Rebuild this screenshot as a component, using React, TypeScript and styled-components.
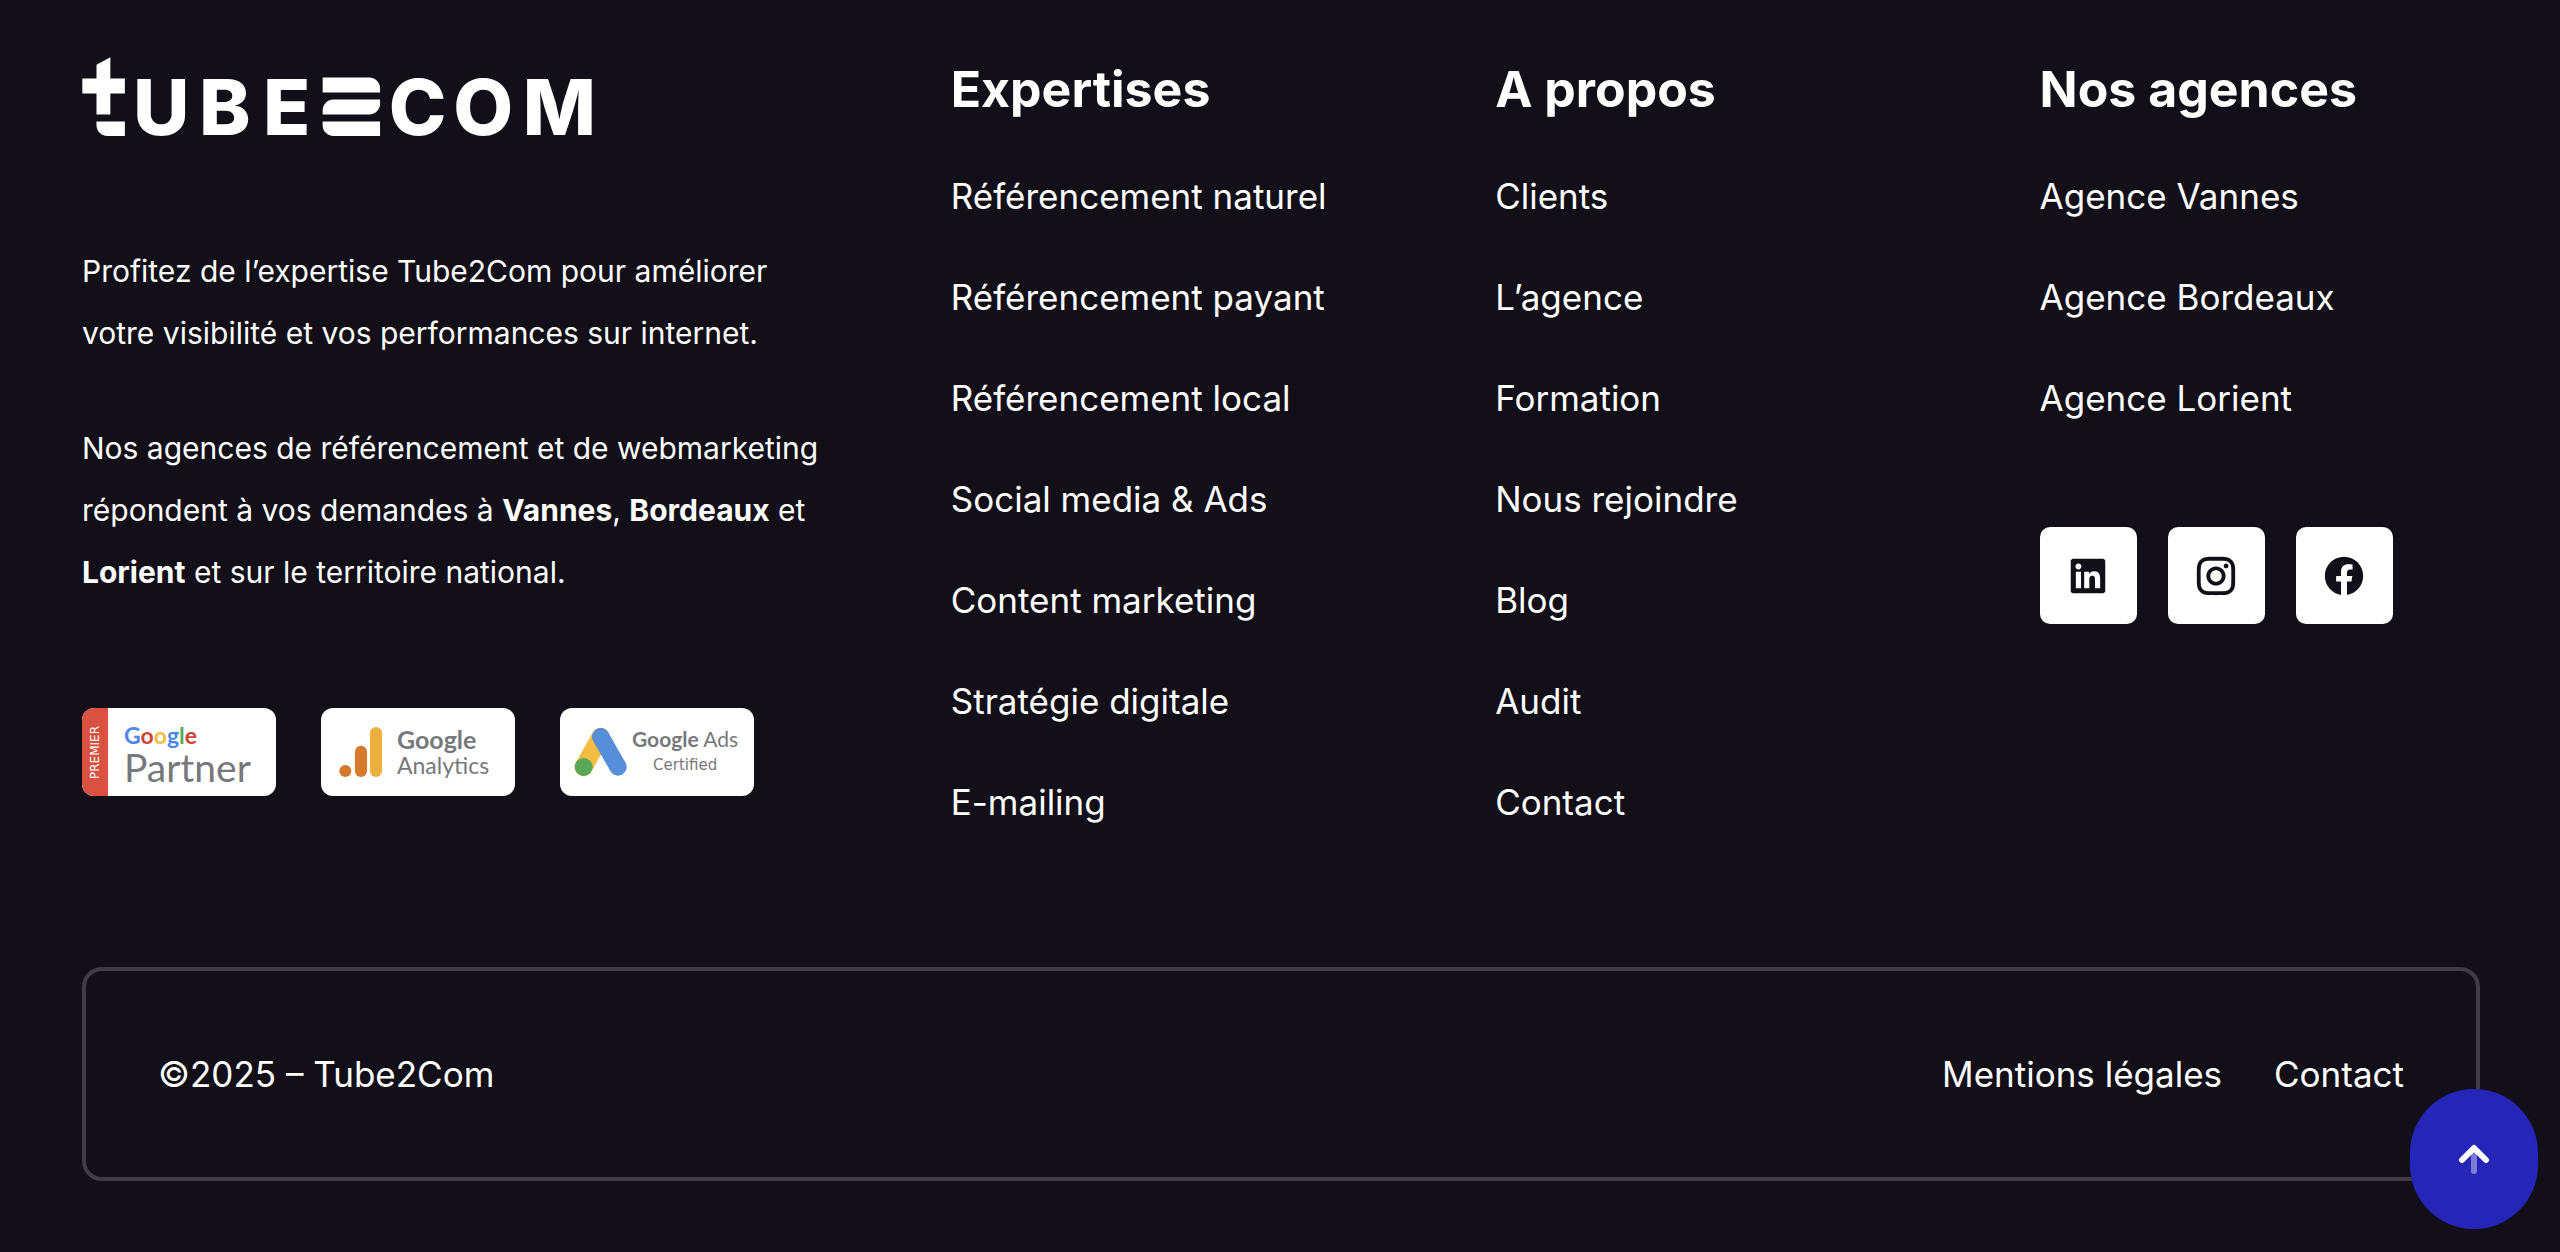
import React from "react";
import styled, { createGlobalStyle } from "styled-components";
import { RiFacebookCircleFill, RiInstagramLine, RiLinkedinBoxFill } from "react-icons/ri";

const GlobalStyle = createGlobalStyle`
  *, *::before, *::after { box-sizing: border-box; }
  body {
    margin: 0;
    background: #120f18;
    color: #fff;
    font-family: Inter, "Liberation Sans", sans-serif;
  }
  h2, p, ul { margin: 0; padding: 0; font-size: inherit; }
  ul { list-style: none; }
  a { color: inherit; text-decoration: none; }
`;

const Footer = styled.footer`
  padding: 55px 80px 71px 82px;
`;

const Columns = styled.div`
  display: grid;
  grid-template-columns: 764fr 440fr 440fr 440fr;
  column-gap: 104px;
`;

const Brand = styled.div`
  display: flex;
  flex-direction: column;
  align-items: flex-start;
  padding-top: 2px;
`;

const LogoLink = styled.a`
  display: block;
  margin-bottom: 103px;
`;

const LogoDrawing = styled.svg`
  display: block;
  overflow: visible;
`;

const Wordmark = styled.text`
  font-family: Inter, sans-serif;
  font-weight: 800;
  font-size: 230px;
`;

const About = styled.div`
  display: flex;
  flex-direction: column;
  gap: 53px;
  max-width: 758px;
  margin-bottom: 105px;
  font-size: 30px;
  line-height: 62px;
`;

const Badges = styled.div`
  display: flex;
  gap: 45px;
`;

const Badge = styled.div`
  display: flex;
  align-items: center;
  width: 194px;
  height: 88px;
  border-radius: 12px;
  overflow: hidden;
  background: #fff;
  color: #77787c;
  font-family: Lato, sans-serif;
`;

const Ribbon = styled.div`
  display: flex;
  align-items: center;
  justify-content: center;
  width: 26px;
  height: 100%;
  background: #d95140;
  color: #fff;
  font-family: "DejaVu Sans", sans-serif;
  font-size: 12px;
`;

const RibbonText = styled.span`
  writing-mode: vertical-rl;
  transform: rotate(180deg);
`;

const BadgeText = styled.div<{ $indent: number; $centered?: boolean }>`
  display: flex;
  flex-direction: column;
  align-items: ${(p) => (p.$centered ? "center" : "flex-start")};
  padding-left: ${(p) => p.$indent}px;
`;

const BadgeLine = styled.span<{ $size: number; $line: number; $bold?: boolean }>`
  font-size: ${(p) => p.$size}px;
  line-height: ${(p) => p.$line}px;
  font-weight: ${(p) => (p.$bold ? 700 : 400)};
  white-space: nowrap;
`;

const CertifiedLine = styled(BadgeLine)`
  font-family: "DejaVu Sans", sans-serif;
`;

const BadgeIcon = styled.svg`
  display: block;
  flex: none;
`;

const AnalyticsBadge = styled(Badge)`
  padding-left: 18px;
`;

const AdsBadge = styled(Badge)`
  padding-left: 14px;
`;

const Tint = styled.span<{ $color: string }>`
  color: ${(p) => p.$color};
`;

const ColumnTitle = styled.h2`
  margin-bottom: 46px;
  font-size: 50px;
  line-height: 68px;
  font-weight: 700;
  white-space: nowrap;
`;

const LinkList = styled.ul`
  display: flex;
  flex-direction: column;
  gap: 47px;
  font-size: 35px;
  line-height: 54px;
  white-space: nowrap;
`;

const Socials = styled.div`
  display: flex;
  gap: 31px;
  margin-top: 102px;
`;

const SocialLink = styled.a`
  display: flex;
  align-items: center;
  justify-content: center;
  width: 97px;
  height: 97px;
  border-radius: 10px;
  background: #fff;
  && { color: #120f18; }
`;

const LegalBar = styled.div`
  display: flex;
  align-items: center;
  justify-content: space-between;
  margin-top: 138px;
  padding: 76px 72px;
  border: 4px solid #3f3c43;
  border-radius: 20px;
  font-size: 35px;
  line-height: 54px;
`;

const LegalLinks = styled.nav`
  display: flex;
  gap: 52px;
`;

const TopButton = styled.button`
  position: fixed;
  right: 22px;
  bottom: 23px;
  display: flex;
  align-items: center;
  justify-content: center;
  width: 128px;
  height: 140px;
  padding: 0;
  border: 0;
  border-radius: 64px;
  background: #2525b8;
  cursor: pointer;
`;

const Logo = () => (
  <LogoDrawing width="509" height="80" viewBox="35 36 1506 237" fill="#fff" role="img" aria-label="Tube2Com">
    <path d="M77 59L118 37V100H161V144H118V206H77V144H35V100H77Z" />
    <path d="M77 227H161V270H109A32 32 0 0 1 77 238Z" />
    <Wordmark x="185 381 570" y="267">UBE</Wordmark>
    <path d="M747 97H885A32 32 0 0 1 917 129V141H747Z" />
    <path d="M779 162H917V174A32 32 0 0 1 885 206H747V194A32 32 0 0 1 779 162Z" />
    <path d="M747 227H917V270H779A32 32 0 0 1 747 238Z" />
    <Wordmark x="943 1134 1340" y="267">COM</Wordmark>
  </LogoDrawing>
);

const AnalyticsIcon = () => (
  <BadgeIcon width="44" height="52" viewBox="84 93 132 156" aria-hidden="true">
    <circle cx="103" cy="228" r="18" fill="#d7792b" />
    <rect x="132" y="152" width="36" height="94" rx="18" fill="#d7792b" />
    <rect x="177" y="96" width="36" height="150" rx="18" fill="#edaf3f" />
  </BadgeIcon>
);

const AdsIcon = () => (
  <BadgeIcon width="54" height="50" viewBox="74 96 162 150" strokeLinecap="round" aria-hidden="true">
    <path d="M103 216L154 125" stroke="#f2bd42" strokeWidth="54" />
    <path d="M154 125L206 216" stroke="#568ed9" strokeWidth="52" />
    <circle cx="103" cy="216" r="27" fill="#5aa755" />
  </BadgeIcon>
);

const ArrowUp = () => (
  <svg width="32" height="32" viewBox="0 0 32 32" fill="none" strokeWidth="6" strokeLinecap="round" strokeLinejoin="round" aria-hidden="true">
    <path d="M16 9V28" stroke="#7c7cd6" />
    <path d="M4 17L16 5L28 17" stroke="#fff" />
  </svg>
);

const googleLetters: [string, string][] = [
  ["G", "#4f86ec"],
  ["o", "#cf4436"],
  ["o", "#f2bf43"],
  ["g", "#4f86ec"],
  ["l", "#58ab5a"],
  ["e", "#cf4436"],
];

const expertises = [
  "Référencement naturel",
  "Référencement payant",
  "Référencement local",
  "Social media & Ads",
  "Content marketing",
  "Stratégie digitale",
  "E-mailing",
];
const about = ["Clients", "L’agence", "Formation", "Nous rejoindre", "Blog", "Audit", "Contact"];
const agencies = ["Agence Vannes", "Agence Bordeaux", "Agence Lorient"];

const socials = [
  { name: "LinkedIn", Icon: RiLinkedinBoxFill },
  { name: "Instagram", Icon: RiInstagramLine },
  { name: "Facebook", Icon: RiFacebookCircleFill },
];

const LinkColumn = ({ title, links, children }: { title: string; links: string[]; children?: React.ReactNode }) => (
  <div>
    <ColumnTitle>{title}</ColumnTitle>
    <LinkList>
      {links.map((label) => (
        <li key={label}>
          <a href="#">{label}</a>
        </li>
      ))}
    </LinkList>
    {children}
  </div>
);

export default function App() {
  return (
    <>
      <GlobalStyle />
      <Footer>
        <Columns>
          <Brand>
            <LogoLink href="#">
              <Logo />
            </LogoLink>
            <About>
              <p>
                Profitez de l’expertise Tube2Com pour améliorer
                <br />
                votre visibilité et vos performances sur internet.
              </p>
              <p>
                Nos agences de référencement et de webmarketing répondent à vos demandes à <b>Vannes</b>,{" "}
                <b>Bordeaux</b> et <b>Lorient</b> et sur le territoire national.
              </p>
            </About>
            <Badges>
              <Badge>
                <Ribbon>
                  <RibbonText>PREMIER</RibbonText>
                </Ribbon>
                <BadgeText $indent={16}>
                  <BadgeLine $size={23} $line={30} $bold>
                    {googleLetters.map(([letter, color], i) => (
                      <Tint key={i} $color={color}>
                        {letter}
                      </Tint>
                    ))}
                  </BadgeLine>
                  <BadgeLine $size={39} $line={34}>
                    Partner
                  </BadgeLine>
                </BadgeText>
              </Badge>
              <AnalyticsBadge>
                <AnalyticsIcon />
                <BadgeText $indent={14}>
                  <BadgeLine $size={25} $line={26} $bold>
                    Google
                  </BadgeLine>
                  <BadgeLine $size={23} $line={26}>
                    Analytics
                  </BadgeLine>
                </BadgeText>
              </AnalyticsBadge>
              <AdsBadge>
                <AdsIcon />
                <BadgeText $indent={4} $centered>
                  <BadgeLine $size={21} $line={26}>
                    <b>Google</b> Ads
                  </BadgeLine>
                  <CertifiedLine $size={15} $line={26}>
                    Certified
                  </CertifiedLine>
                </BadgeText>
              </AdsBadge>
            </Badges>
          </Brand>
          <LinkColumn title="Expertises" links={expertises} />
          <LinkColumn title="A propos" links={about} />
          <LinkColumn title="Nos agences" links={agencies}>
            <Socials>
              {socials.map(({ name, Icon }) => (
                <SocialLink key={name} href="#" aria-label={name}>
                  <Icon size={46} />
                </SocialLink>
              ))}
            </Socials>
          </LinkColumn>
        </Columns>
        <LegalBar>
          <span>©2025 – Tube2Com</span>
          <LegalLinks>
            <a href="#">Mentions légales</a>
            <a href="#">Contact</a>
          </LegalLinks>
        </LegalBar>
      </Footer>
      <TopButton type="button" aria-label="Haut de page">
        <ArrowUp />
      </TopButton>
    </>
  );
}
